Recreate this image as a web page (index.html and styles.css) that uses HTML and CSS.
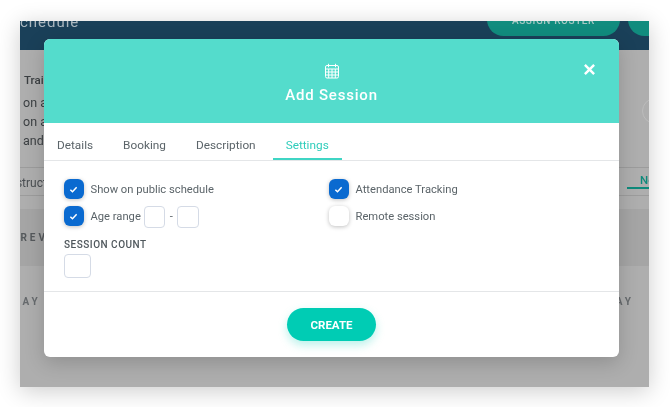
FILE: index.html
```html
<!DOCTYPE html>
<html lang="en">
<head>
<meta charset="utf-8">
<title>Add Session</title>
<link rel="stylesheet" href="styles.css">
</head>
<body>
<div class="frame">
  <div class="page">
    <header class="topbar">
      <span class="brand">Schedule</span>
      <span class="top-actions">
        <span class="pill pill-main">ASSIGN ROSTER</span>
        <span class="pill pill-next"></span>
      </span>
    </header>
    <section class="intro">
      <div class="intro-left">
        <div class="intro-title">Training</div>
        <div class="intro-line">on a</div>
        <div class="intro-line">on a</div>
        <div class="intro-line">and</div>
      </div>
      <span class="circle"></span>
    </section>
    <div class="subtabs">
      <span class="subtab-left">Instructor</span>
      <span class="subtab-right">Next</span>
    </div>
    <div class="band"><span class="band-text">PREV</span></div>
    <div class="days"><span>DAY</span><span>DAY</span></div>
  </div>

  <div class="modal">
    <div class="modal-head">
      <svg class="cal" viewBox="0 0 16 16" width="16" height="16" fill="none" stroke="#fff" stroke-width="1">
        <rect x="1.5" y="2.5" width="13" height="12.5" rx="1.5"/>
        <path d="M4.5 .8v3.4M11.5 .8v3.4M1.5 6h13M1.5 9h13M1.5 12h13M4.7 6v9M8 6v9M11.3 6v9"/>
      </svg>
      <h1 class="modal-title">Add Session</h1>
      <svg class="close" viewBox="0 0 10 10" width="11" height="11" fill="none" stroke="#fff" stroke-width="2.2">
        <path d="M.8 .8l8.4 8.4M9.2 .8L.8 9.2"/>
      </svg>
    </div>
    <nav class="tabs">
      <span class="tab">Details</span>
      <span class="tab">Booking</span>
      <span class="tab">Description</span>
      <span class="tab tab-active">Settings</span>
    </nav>
    <div class="settings">
      <div class="grid">
        <div class="row">
          <span class="check on"><svg viewBox="0 0 10 10" width="9" height="9" fill="none" stroke="#fff" stroke-width="1.7"><path d="M1.5 5.2l2.4 2.3 4.6-5"/></svg></span>
          <span class="label">Show on public schedule</span>
        </div>
        <div class="row">
          <span class="check on"><svg viewBox="0 0 10 10" width="9" height="9" fill="none" stroke="#fff" stroke-width="1.7"><path d="M1.5 5.2l2.4 2.3 4.6-5"/></svg></span>
          <span class="label">Attendance Tracking</span>
        </div>
        <div class="row">
          <span class="check on"><svg viewBox="0 0 10 10" width="9" height="9" fill="none" stroke="#fff" stroke-width="1.7"><path d="M1.5 5.2l2.4 2.3 4.6-5"/></svg></span>
          <span class="label">Age range</span>
          <span class="box box-small box-first"></span>
          <span class="dash">-</span>
          <span class="box box-small"></span>
        </div>
        <div class="row">
          <span class="check"></span>
          <span class="label">Remote session</span>
        </div>
      </div>
      <div class="count-label">SESSION COUNT</div>
      <span class="box box-count"></span>
    </div>
    <div class="modal-foot">
      <button class="create" type="button">CREATE</button>
    </div>
  </div>
</div>
</body>
</html>
```

FILE: styles.css
```css
* { box-sizing: border-box; }

html, body {
  margin: 0;
  height: 100%;
  background: #fff;
  overflow: hidden;
}

body {
  padding: 21px 0 0 20px;
  font-family: Roboto, "Liberation Sans", sans-serif;
}

.frame {
  position: relative;
  width: 629px;
  height: 366px;
  box-shadow: 0 4px 22px rgba(0, 0, 0, .2);
  filter: blur(.35px);
}

.page {
  height: 100%;
  background: #aeaeae;
  overflow: hidden;
  color: #3b3f42;
  display: flex;
  flex-direction: column;
}

.topbar {
  height: 29px;
  flex: none;
  background: #1a4059;
  display: flex;
  justify-content: space-between;
}

.brand {
  font-size: 15px;
  line-height: 18px;
  letter-spacing: 1px;
  margin-top: -8px;
  margin-left: -10px;
  color: #a9b6bf;
}

.top-actions {
  display: flex;
  gap: 8px;
  margin-top: -18px;
  margin-right: -30px;
  height: 33px;
}

.pill {
  display: flex;
  align-items: center;
  justify-content: center;
  border-radius: 17px;
  background: #118c7e;
  font-size: 10px;
  font-weight: 500;
  letter-spacing: .6px;
  color: #a8c9c5;
  padding-top: 2px;
}

.pill-main { width: 133px; }
.pill-next { width: 51px; }

.intro {
  height: 117px;
  flex: none;
  display: flex;
  justify-content: space-between;
  padding: 22px 0 0 3px;
}

.intro-title {
  font-size: 11.5px;
  font-weight: 500;
  line-height: 16px;
  margin: 0 0 5px 1px;
}

.intro-line {
  font-size: 12.5px;
  line-height: 19px;
}

.circle {
  width: 26px;
  height: 26px;
  margin: 26px -19px 0 0;
  border: 1px solid #bcbcbc;
  border-radius: 50%;
}

.subtabs {
  height: 29px;
  flex: none;
  display: flex;
  justify-content: space-between;
  padding-top: 8px;
  margin-bottom: 13px;
  border-top: 1px solid #9c9c9c;
  border-bottom: 1px solid #9c9c9c;
  font-size: 12px;
  color: #4a4e52;
}

.subtab-left { margin-left: -14px; }

.subtab-right {
  width: 22px;
  height: 15px;
  margin-top: -2px;
  white-space: nowrap;
  overflow: hidden;
  color: #0e8a7b;
  font-weight: 500;
  font-size: 11.5px;
  line-height: 12px;
  border-bottom: 2px solid #0e8a7b;
  padding-left: 13px;
}

.band {
  height: 57px;
  flex: none;
  background: #a5a5a5;
  display: flex;
  align-items: center;
}

.band-text {
  font-size: 10px;
  font-weight: 700;
  letter-spacing: 3px;
  margin-left: -9px;
  color: #55595c;
}

.days {
  display: flex;
  justify-content: space-between;
  padding: 30px 15px 0 0;
  margin-left: -7px;
  font-size: 10px;
  font-weight: 700;
  letter-spacing: 3px;
  color: #666a6d;
}

.modal {
  position: absolute;
  left: 24px;
  top: 18px;
  width: 575px;
  height: 318px;
  background: #fff;
  border-radius: 6px;
  overflow: hidden;
  box-shadow: 0 6px 20px rgba(0, 0, 0, .18);
  display: flex;
  flex-direction: column;
  color: #5b6469;
}

.modal-head {
  position: relative;
  height: 84px;
  flex: none;
  background: #54dccc;
  display: flex;
  flex-direction: column;
  align-items: center;
  padding-top: 24px;
}

.cal { display: block; }

.modal-title {
  margin: 6px 0 0;
  font-size: 15px;
  line-height: 20px;
  font-weight: 500;
  letter-spacing: .8px;
  color: #fff;
}

.close {
  position: absolute;
  right: 24px;
  top: 25px;
}

.tabs {
  height: 38px;
  flex: none;
  display: flex;
  gap: 4px;
  border-bottom: 1px solid #e4e6e8;
}

.tab {
  padding: 0 13px;
  font-size: 11.8px;
  line-height: 45px;
  height: 38px;
  white-space: nowrap;
}

.tab-active {
  color: #2fcdbb;
  border-bottom: 2px solid #3fd5c4;
  height: 37px;
}

.settings {
  height: 131px;
  flex: none;
  padding: 18px 0 0 20px;
  border-bottom: 1px solid #e4e6e8;
}

.grid {
  display: grid;
  grid-template-columns: 265px auto;
  row-gap: 7px;
}

.row {
  display: flex;
  align-items: flex-start;
  height: 20px;
  font-size: 11.2px;
  line-height: 22px;
}

.check {
  width: 19.5px;
  height: 20px;
  flex: none;
  margin-right: 7px;
  border-radius: 6px;
  background: #fff;
  box-shadow: 0 1px 4px rgba(0, 0, 0, .25);
  display: flex;
  align-items: center;
  justify-content: center;
}

.check.on { background: #0a6ad0; }

.label { white-space: nowrap; }

.box {
  display: block;
  flex: none;
  border: 1px solid #d5dbe6;
  border-radius: 4px;
  background: #fff;
}

.box-small { width: 21.5px; height: 22px; }
.box-first { margin-left: 3px; }

.dash { width: 12px; text-align: center; }

.count-label {
  margin-top: 13px;
  font-size: 10px;
  line-height: 12px;
  font-weight: 500;
  letter-spacing: .5px;
  color: #4f575c;
}

.box-count {
  width: 27px;
  height: 24px;
  margin-top: 3px;
}

.modal-foot {
  flex: 1;
  display: flex;
  justify-content: center;
  padding-top: 16px;
}

.create {
  width: 89px;
  height: 33px;
  border: 0;
  border-radius: 17px;
  background: #00ccb4;
  color: #fff;
  font: 700 11.5px Roboto, "Liberation Sans", sans-serif;
  box-shadow: 0 4px 10px rgba(0, 204, 180, .28);
}
```
